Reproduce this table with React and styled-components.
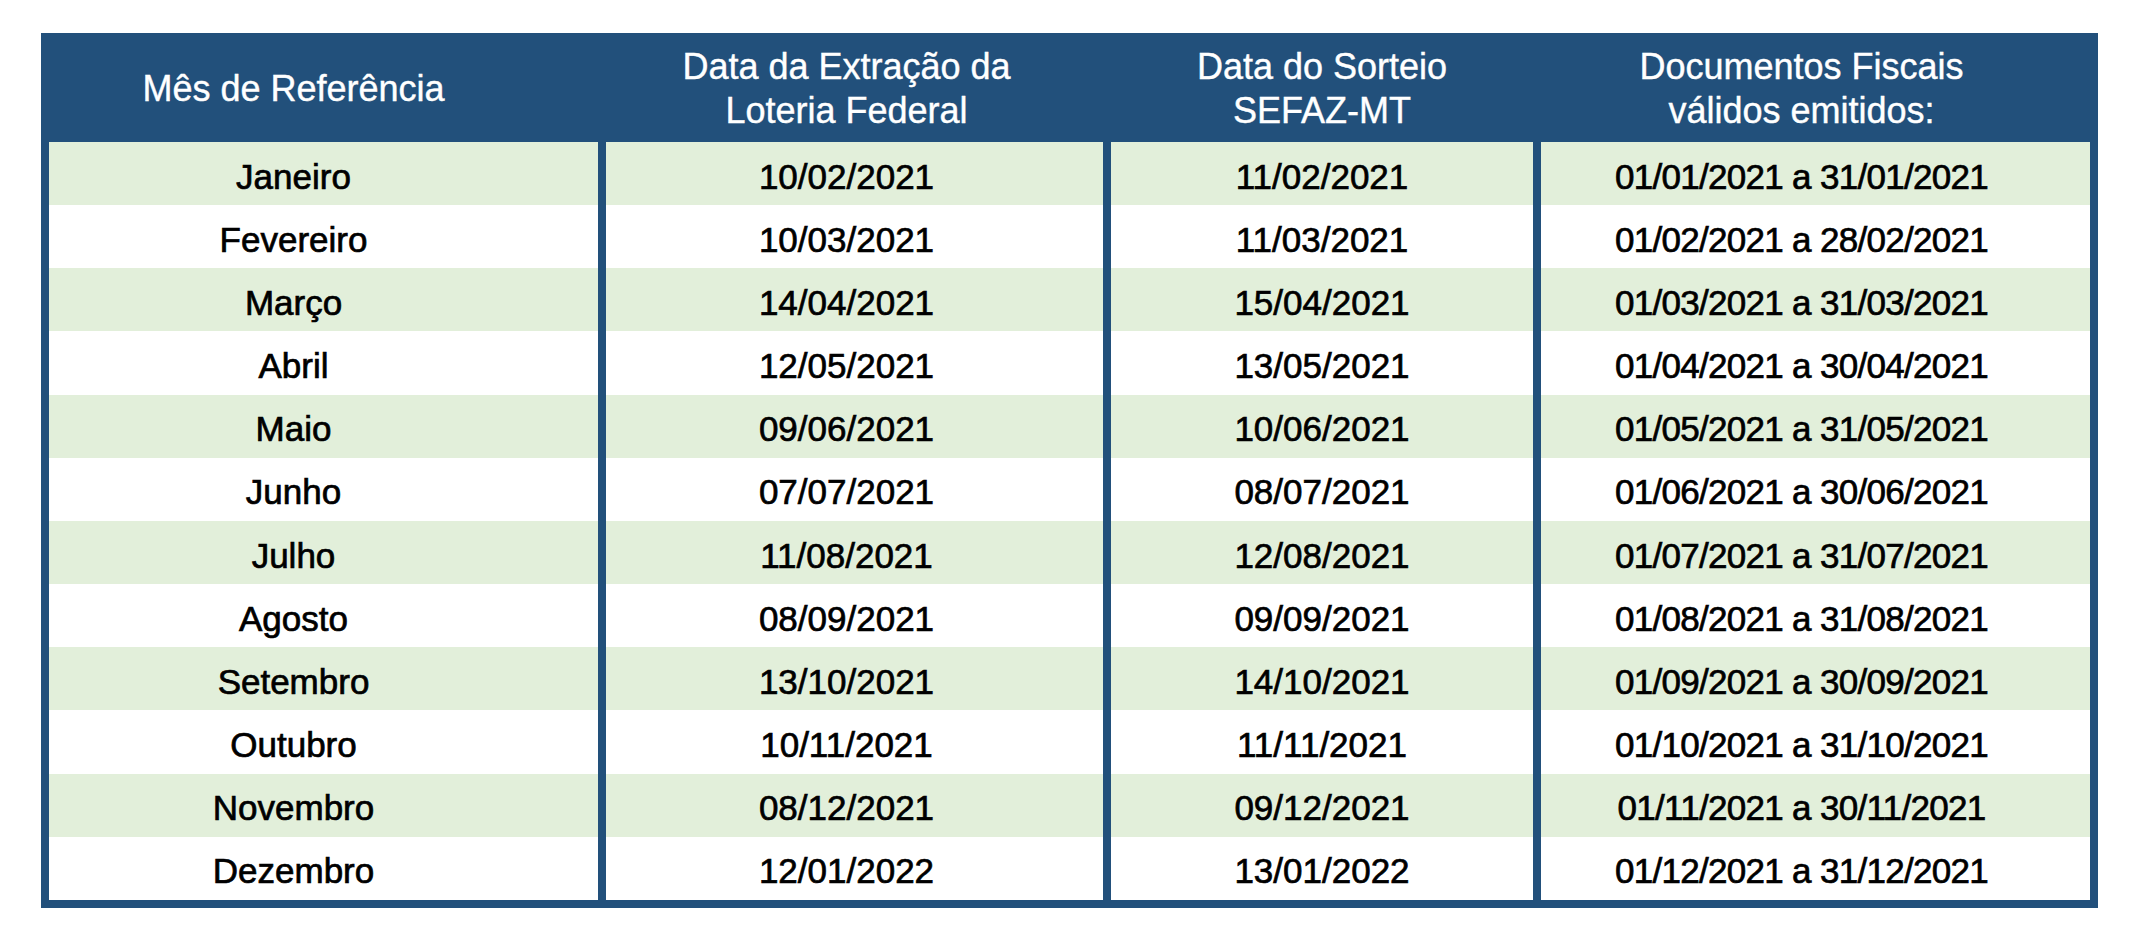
import React from 'react'
import { createGlobalStyle, styled } from 'styled-components'

const rows = [
  ['Janeiro', '10/02/2021', '11/02/2021', '01/01/2021 a 31/01/2021'],
  ['Fevereiro', '10/03/2021', '11/03/2021', '01/02/2021 a 28/02/2021'],
  ['Março', '14/04/2021', '15/04/2021', '01/03/2021 a 31/03/2021'],
  ['Abril', '12/05/2021', '13/05/2021', '01/04/2021 a 30/04/2021'],
  ['Maio', '09/06/2021', '10/06/2021', '01/05/2021 a 31/05/2021'],
  ['Junho', '07/07/2021', '08/07/2021', '01/06/2021 a 30/06/2021'],
  ['Julho', '11/08/2021', '12/08/2021', '01/07/2021 a 31/07/2021'],
  ['Agosto', '08/09/2021', '09/09/2021', '01/08/2021 a 31/08/2021'],
  ['Setembro', '13/10/2021', '14/10/2021', '01/09/2021 a 30/09/2021'],
  ['Outubro', '10/11/2021', '11/11/2021', '01/10/2021 a 31/10/2021'],
  ['Novembro', '08/12/2021', '09/12/2021', '01/11/2021 a 30/11/2021'],
  ['Dezembro', '12/01/2022', '13/01/2022', '01/12/2021 a 31/12/2021'],
]

const headers = [
  ['Mês de Referência'],
  ['Data da Extração da', 'Loteria Federal'],
  ['Data do Sorteio', 'SEFAZ-MT'],
  ['Documentos Fiscais', 'válidos emitidos:'],
]

// text in the source sits a little left of each column's centre
const shift = [60, 16, 0, 28]

export default function App() {
  return (
    <>
      <GlobalStyle />
      <Page>
        <Table>
          {headers.map((lines, i) => (
            <HeadCell key={i} $shift={shift[i]}>
              {lines.map((l) => (
                <span key={l}>{l}</span>
              ))}
            </HeadCell>
          ))}
          {rows.map((row, r) =>
            row.map((val, c) => (
              <Cell
                key={r + '-' + c}
                $striped={r % 2 === 0}
                $tight={c === 3}
                $shift={shift[c]}
              >
                {val}
              </Cell>
            ))
          )}
        </Table>
      </Page>
    </>
  )
}

const GlobalStyle = createGlobalStyle`
  body {
    margin: 0;
    background: #ffffff;
    font-family: "Liberation Sans", Arial, sans-serif;
  }
`

const Page = styled.div`
  padding: 33px 0 0 41px;
`

const Table = styled.div`
  display: grid;
  grid-template-columns: 549px 497px 422px 549px;
  grid-template-rows: 101px;
  grid-auto-rows: 63.17px;
  column-gap: 8px;
  width: max-content;
  padding: 8px;
  background: #22507b;
`

const HeadCell = styled.div`
  display: flex;
  flex-direction: column;
  align-items: center;
  justify-content: center;
  color: #ffffff;
  font-size: 36px;
  line-height: 44px;
  padding: 0 ${(p) => p.$shift}px 5px 0;
  -webkit-text-stroke: 0.4px #ffffff;
`

const Cell = styled.div`
  display: flex;
  align-items: center;
  justify-content: center;
  background: ${(p) => (p.$striped ? '#e2efda' : '#ffffff')};
  color: #000000;
  font-size: 35px;
  letter-spacing: ${(p) => (p.$tight ? '-0.7px' : '0')};
  -webkit-text-stroke: 0.7px #000000;
  padding: 6px ${(p) => p.$shift}px 0 0;
`
